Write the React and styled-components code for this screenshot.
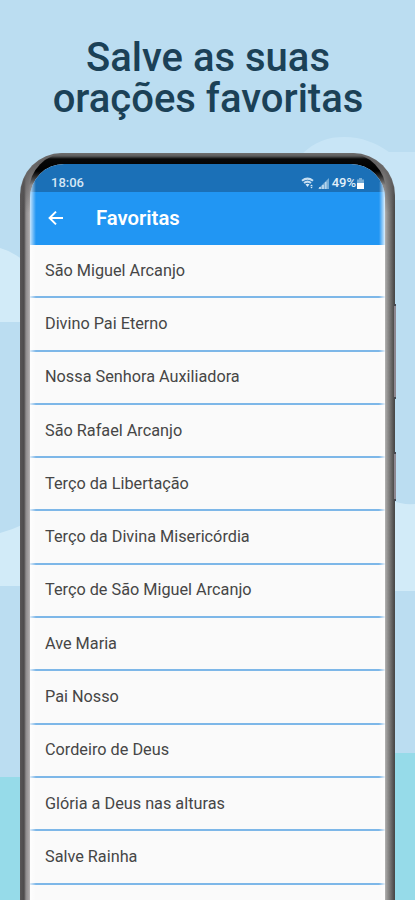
import styled, { createGlobalStyle } from 'styled-components';

const prayers = [
    'São Miguel Arcanjo',
    'Divino Pai Eterno',
    'Nossa Senhora Auxiliadora',
    'São Rafael Arcanjo',
    'Terço da Libertação',
    'Terço da Divina Misericórdia',
    'Terço de São Miguel Arcanjo',
    'Ave Maria',
    'Pai Nosso',
    'Cordeiro de Deus',
    'Glória a Deus nas alturas',
    'Salve Rainha',
    '',
]

export default function App() {
    return (
        <Page>
            <GlobalStyle />
            <Sky />
            <Title>Salve as suas<br />orações favoritas</Title>
            <Phone>
                <SideKey $top={151} $height={95} />
                <SideKey $top={299} $height={49} />
                <Bezel>
                    <Screen>
                        <StatusBar>
                            <Time>18:06</Time>
                            <StatusIcons />
                        </StatusBar>
                        <AppBar>
                            <BackIcon />
                            <AppTitle>Favoritas</AppTitle>
                        </AppBar>
                        <List>
                            {prayers.map((name, i) => <Row key={i}>{name}</Row>)}
                        </List>
                        <Glare />
                    </Screen>
                </Bezel>
            </Phone>
        </Page>
    )
}

function Sky() {
    return (
        <SkySvg viewBox='0 0 415 900'>
            <rect width='415' height='900' fill='#bbddf1' />
            <path d='M0 248 Q12 251 24 261 V322 H0Z' fill='#d2ebf8' />
            <path d='M0 533 Q12 530 24 524 V586 H0Z' fill='#d2ebf8' />
            <path d='M300 156 C314 141 329 137 344 137 C362 137 376 143 389 152 H415 V200 H300Z' fill='#c8e5f6' />
            <path d='M390 500 Q402 505 415 504 V591 H390Z' fill='#d2ebf8' />
            <rect y='777' width='200' height='123' fill='#96dbe9' />
            <rect x='200' y='753' width='215' height='147' fill='#96dbe9' />
        </SkySvg>
    )
}

function BackIcon() {
    return (
        <Arrow viewBox='0 0 16 16'>
            <path d='M15 8H2 M8 1.6L1.6 8L8 14.4' fill='none' stroke='#fff' strokeWidth='2' />
        </Arrow>
    )
}

function StatusIcons() {
    return (
        <Status>
            <svg width='14' height='12' viewBox='0 0 14 12'>
                <path d='M1 3.7Q6.5 -.5 12 3.7 M3 6Q6.5 3.3 10 6' fill='none' stroke='#c6def1' strokeWidth='2' />
                <path d='M4.5 7.3Q6.5 6 8.5 7.3L6.5 10Z' fill='#d7eaf7' />
                <path d='M9.2 9L10.5 7.4L11.8 9Z M9.2 9.8H11.8L10.5 11.4Z' fill='#d7eaf7' />
            </svg>
            <svg width='11' height='11' viewBox='0 0 11 11'>
                <path d='M0 11L11 0V11Z' fill='#78aed7' />
                <path d='M1 11V9H3V11Z M4 11V7H6V11Z M7 11V4H8.5V11Z' fill='#b4d4ec' />
            </svg>
            <Battery>49%</Battery>
            <svg width='7' height='11' viewBox='0 0 7 11'>
                <path d='M2 0H5V1.5H7V6H0V1.5H2Z' fill='#76acd6' />
                <rect y='5' width='7' height='6' fill='#fff' />
            </svg>
        </Status>
    )
}

const GlobalStyle = createGlobalStyle`
    body {
        margin: 0;
        font-family: Roboto, sans-serif;
    }
    * {
        box-sizing: border-box;
    }
`;

const Page = styled.div`
    position: relative;
    width: 415px;
    height: 900px;
    overflow: hidden;
`;

const SkySvg = styled.svg`
    position: absolute;
    inset: 0;
    width: 415px;
    height: 900px;
`;

const Title = styled.h1`
    position: relative;
    height: 153px;
    margin: 0;
    padding: 37px 0 0 1px;
    color: #1b4157;
    font-size: 40px;
    font-weight: 500;
    line-height: 41px;
    text-align: center;
    white-space: nowrap;
`;

const Phone = styled.div`
    position: relative;
    width: 375px;
    height: 850px;
    margin-left: 20px;
    border-radius: 42px;
    background:
        linear-gradient(#5c5a5a 0, rgba(92, 90, 90, .85) 18px, rgba(92, 90, 90, 0) 60px),
        linear-gradient(to right, #595657 0, #4e4b4c 4px, #8f8c8d 6px, #aaa6a7 9px, #c8c6c7 11px, #aaa 50%, #c4c3c2 364px, #989796 367px, #6d6c6b 371px, #414141 375px);
    box-shadow: inset 0 2px 1px #6a6868;
`;

const SideKey = styled.div`
    position: absolute;
    top: ${props => props.$top}px;
    right: -1px;
    width: 2px;
    height: ${props => props.$height}px;
    border: solid #454850;
    border-width: 2px 0;
    background: #8d8790;
`;

const Bezel = styled.div`
    height: 850px;
    margin: 0 9px;
    padding: 11px 1px 0;
    border-radius: 38px 38px 0 0;
    background: linear-gradient(#706f6f 0, #5c5c5c 3px, #080808 6px, #000 18px, transparent 32px);
`;

const Screen = styled.div`
    position: relative;
    height: 839px;
    overflow: hidden;
    border-radius: 34px 34px 0 0;
    background: #fafafa;
`;

const StatusBar = styled.div`
    display: flex;
    align-items: center;
    justify-content: space-between;
    height: 28px;
    padding: 10px 21px 0 21px;
    background: #1b70b7;
`;

const Time = styled.div`
    color: #d5e7f5;
    font-size: 13px;
    font-weight: 500;
    line-height: 14px;
`;

const Status = styled.div`
    display: flex;
    align-items: center;
    gap: 3px;
`;

const Battery = styled.span`
    margin: 0 -2px 0 0;
    color: #e1eff9;
    font-size: 13px;
    font-weight: 500;
    line-height: 14px;
`;

const AppBar = styled.div`
    display: flex;
    align-items: center;
    height: 53px;
    padding: 0 0 1px 18px;
    background: #2196f3;
`;

const Arrow = styled.svg`
    width: 16px;
    height: 16px;
`;

const AppTitle = styled.div`
    margin-left: 32px;
    color: #fff;
    font-size: 20.3px;
    font-weight: 600;
`;

const List = styled.div`
    display: flex;
    flex-direction: column;
`;

const Row = styled.div`
    display: flex;
    align-items: center;
    height: 53.3px;
    padding: 0 15px 1px;
    border-bottom: 2px solid #7db7e8;
    color: #464646;
    font-size: 16.25px;
    white-space: nowrap;
`;

/* light reflected along the curved edges of the glass */
const Glare = styled.div`
    position: absolute;
    inset: 18px 0 0;
    background: linear-gradient(to right, rgba(255, 255, 255, .75) 0, transparent 6px, transparent 349px, rgba(255, 255, 255, .85) 355px);
`;
